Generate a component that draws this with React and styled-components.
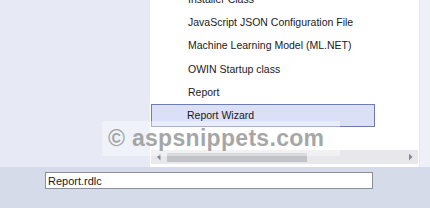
import React from "react";
import styled, { createGlobalStyle } from "styled-components";

const GlobalStyle = createGlobalStyle`
  html, body { margin: 0; padding: 0; background: #d6dbe9; }
  body { font-family: "Liberation Sans", Arial, sans-serif; }
`;

const Page = styled.div`
  position: relative;
  width: 430px;
  height: 208px;
  display: flex;
  flex-direction: column;
  overflow: hidden;
`;

const Top = styled.div`
  height: 167px;
  display: flex;
`;

const LeftPane = styled.div`
  flex: 0 0 150px;
  background: #e7eaf5;
`;

const ListPanel = styled.div`
  flex: 0 0 269px;
  background: #ffffff;
  border-right: 1px solid #e4e6ee;
  display: flex;
  flex-direction: column;
  overflow: hidden;
`;

const RightStrip = styled.div`
  flex: 1;
  background: #eef0f8;
`;

const List = styled.div`
  flex: 1;
  overflow: hidden;
`;

const ListInner = styled.div`
  margin-top: -13px;
  display: flex;
  flex-direction: column;
`;

const Item = styled.div`
  box-sizing: border-box;
  width: 224px;
  height: 23.33px;
  margin-left: 1px;
  padding-left: ${(p) => (p.$selected ? "35px" : "36px")};
  display: flex;
  align-items: center;
  font-size: 10.5px;
  color: #1a1a1a;
  white-space: nowrap;
  border: 1px solid ${(p) => (p.$selected ? "#6c7db5" : "transparent")};
  background: ${(p) => (p.$selected ? "#dbe0f7" : "transparent")};
`;

const HScroll = styled.div`
  height: 14px;
  margin: 0 0 3px 1px;
  width: 267px;
  background: #e8e8ec;
  display: flex;
  align-items: center;
`;

const Arrow = styled.svg`
  flex: 0 0 16px;
  width: 16px;
  height: 14px;
`;

const Track = styled.div`
  flex: 1;
  height: 14px;
  display: flex;
  align-items: center;
`;

const Thumb = styled.div`
  height: 9px;
  background: #c2c3c9;
`;

const Bottom = styled.div`
  flex: 1;
  background: #d6dbe9;
  padding: 5px 0 0 45px;
`;

const NameBox = styled.div`
  box-sizing: border-box;
  width: 328px;
  height: 17px;
  background: #ffffff;
  border: 1px solid #8a8f9c;
  display: flex;
  align-items: center;
  padding-left: 2px;
  font-size: 11px;
  color: #1a1a1a;
`;

const Watermark = styled.div`
  position: absolute;
  left: 102px;
  top: 121px;
  width: 238px;
  height: 35px;
  background: rgba(255, 255, 255, 0.4);
  display: flex;
  align-items: center;
  padding-left: 6px;
  box-sizing: border-box;
  font-family: "Liberation Sans", Arial, sans-serif;
  font-weight: bold;
  font-size: 23px;
  letter-spacing: 0.3px;
  color: rgba(150, 150, 150, 0.85);
  white-space: nowrap;
`;

const items = [
  "Installer Class",
  "JavaScript JSON Configuration File",
  "Machine Learning Model (ML.NET)",
  "OWIN Startup class",
  "Report",
  "Report Wizard",
];

export default function App() {
  return (
    <>
      <GlobalStyle />
      <Page>
        <Top>
          <LeftPane />
          <ListPanel>
            <List>
              <ListInner>
                {items.map((t) => (
                  <Item key={t} $selected={t === "Report Wizard"}>
                    {t}
                  </Item>
                ))}
              </ListInner>
            </List>
            <HScroll>
              <Arrow viewBox="0 0 16 14">
                <path d="M6 7 L9.5 3.5 L9.5 10.5 Z" fill="#868999" />
              </Arrow>
              <Track>
                <Thumb style={{ width: "140px" }} />
              </Track>
              <Arrow viewBox="0 0 16 14">
                <path d="M7 3.5 L10.5 7 L7 10.5 Z" fill="#868999" />
              </Arrow>
            </HScroll>
          </ListPanel>
          <RightStrip />
        </Top>
        <Bottom>
          <NameBox>Report.rdlc</NameBox>
        </Bottom>
        <Watermark>© aspsnippets.com</Watermark>
      </Page>
    </>
  );
}
